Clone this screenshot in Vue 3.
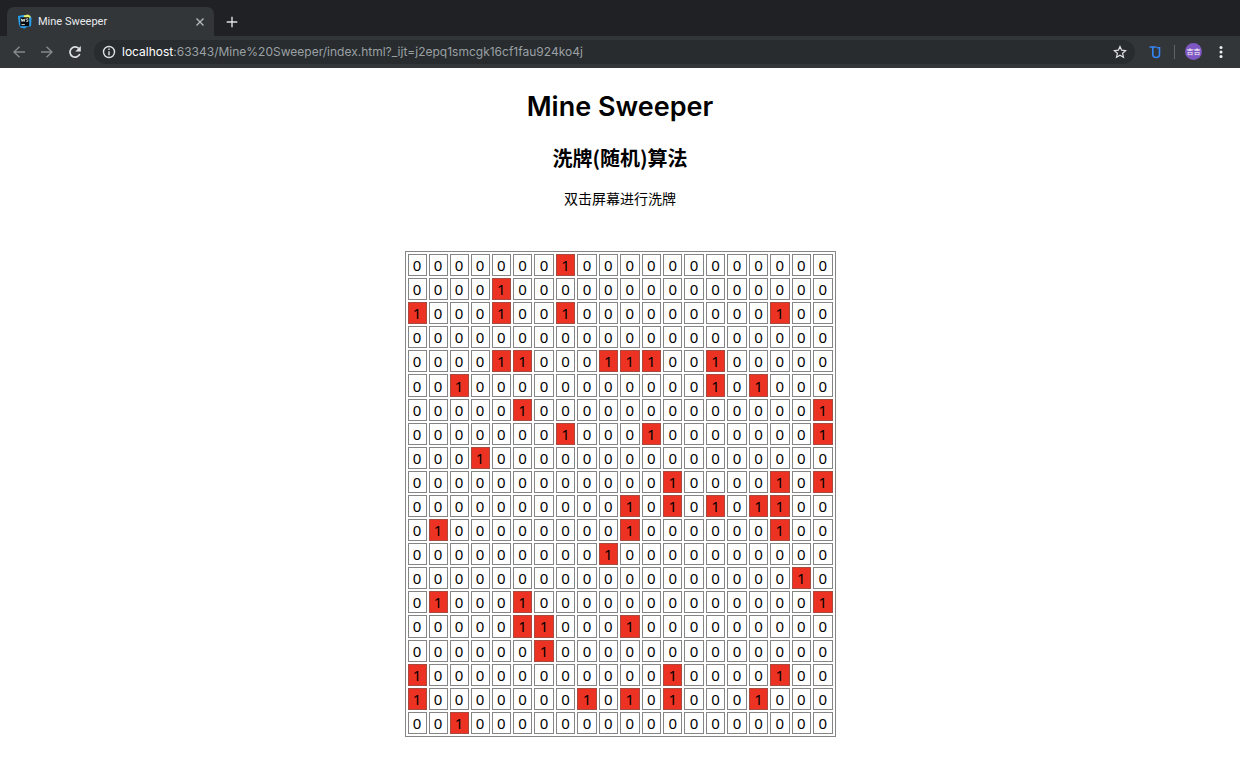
<script setup>
const columns = 20
const mines = [
  [7], [4], [0, 4, 7, 17], [], [4, 5, 9, 10, 11, 14],
  [2, 14, 16], [5, 19], [7, 11, 19], [3], [12, 17, 19],
  [10, 12, 14, 16, 17], [1, 10, 17], [9], [18], [1, 5, 19],
  [5, 6, 10], [6], [0, 12, 17], [0, 8, 10, 12, 16], [2],
]
const board = mines.map((row) =>
  Array.from({ length: columns }, (_, c) => (row.includes(c) ? 1 : 0))
)
</script>

<template>
  <div class="browser">
    <header>
      <div class="tabs">
        <div class="tab">
          <svg class="favicon" viewBox="0 0 16 16">
            <path d="M1 2l6-1 7 1 1.500 2-.5 9-4 .5-3 2-4.500-1L2 11z" fill="#29a0ee" />
            <path d="M7.500 1.500l4-1 3 1.500-.5 2.500-7-.5z" fill="#e5ec6b" />
            <path d="M3.500 3.500h9.500v9.500H3.500z" fill="#080b0d" />
            <path d="M4.500 5l.9 3 1.100-2.500 1.100 2.500.9-3M12 5.300c-1-.7-2.300-.3-2.100.500.3.800 2 .6 2 1.500 0 .8-1.400.9-2.200.3M4.800 11.300h3.500" fill="none" stroke="#fff" stroke-width=".9" />
          </svg>
          <span class="tab-title">Mine Sweeper</span>
          <button class="icon close" aria-label="Close tab">
            <svg viewBox="0 0 10 10"><path d="M1.500 1.500l7 7m0-7l-7 7" /></svg>
          </button>
        </div>
        <button class="icon add" aria-label="New tab">
          <svg viewBox="0 0 12 12"><path d="M6 .7v10.600M.7 6h10.600" /></svg>
        </button>
      </div>
      <nav class="toolbar">
        <button class="icon dim" aria-label="Back">
          <svg viewBox="0 0 14 14"><path d="M13 7H2m5.500-5.300L2 7l5.500 5.300" /></svg>
        </button>
        <button class="icon dim" aria-label="Forward">
          <svg viewBox="0 0 14 14"><path d="M1 7h11M6.500 1.700L12 7l-5.500 5.300" /></svg>
        </button>
        <button class="icon reload" aria-label="Reload">
          <svg viewBox="0 0 14 14">
            <path d="M11.800 9A5.100 5.100 0 1 1 10.700 3.400" />
            <path class="solid" d="M12.800 1v5.500H7.300z" />
          </svg>
        </button>
        <div class="address">
          <svg class="info" viewBox="0 0 14 14">
            <circle cx="7" cy="7" r="5.500" /><path d="M7 6.200v4M7 3.600v1.500" />
          </svg>
          <a class="url" href="#"><b>localhost</b>:63343/Mine%20Sweeper/index.html?_ijt=j2epq1smcgk16cf1fau924ko4j</a>
          <button class="icon star" aria-label="Bookmark">
            <svg viewBox="0 0 14 14"><path d="M7 1.500l1.600 3.700 4 .4-3 2.700.9 4L7 10.200l-3.500 2.100.9-4-3-2.700 4-.4z" /></svg>
          </button>
        </div>
        <button class="icon extension" aria-label="Extension">
          <svg viewBox="0 0 14 14"><path d="M1.500 2h7M4.800 2v7.500c0 4 6.700 4 6.700 0V2.800H9" /></svg>
        </button>
        <span class="divider"></span>
        <button class="avatar">吉吉</button>
        <button class="icon menu" aria-label="Menu">
          <svg viewBox="0 0 14 14">
            <circle cx="7" cy="2.500" r="1.500" /><circle cx="7" cy="7" r="1.500" /><circle cx="7" cy="11.500" r="1.500" />
          </svg>
        </button>
      </nav>
    </header>
    <main>
      <h1>Mine Sweeper</h1>
      <h2>洗牌(随机)算法</h2>
      <p>双击屏幕进行洗牌</p>
      <table>
        <colgroup>
          <col class="narrow" span="4" />
          <col span="16" />
        </colgroup>
        <tbody>
          <tr v-for="(row, r) in board" :key="r">
            <td v-for="(value, c) in row" :key="c" :class="{ mine: value }">{{ value }}</td>
          </tr>
        </tbody>
      </table>
    </main>
  </div>
</template>

<style>
body {
  margin: 0;
  background: #fff;
}
</style>

<style scoped>
.browser {
  font-family: Inter, "Noto Sans CJK SC", sans-serif;
  color: #000;
}
button {
  padding: 0;
  border: 0;
  background: none;
  font-family: inherit;
}
svg {
  display: block;
  width: 14px;
  height: 14px;
}
.icon,
.info {
  flex: none;
  fill: none;
  stroke: #dfe1e3;
  stroke-width: 1.4;
}
.tabs {
  display: flex;
  align-items: flex-end;
  height: 36px;
  background: #202124;
}
.tab {
  display: flex;
  align-items: center;
  box-sizing: border-box;
  width: 207px;
  height: 29px;
  margin-left: 7px;
  padding: 0 9px 0 10px;
  border-radius: 7px 7px 0 0;
  background: #323639;
  color: #e8eaed;
  font-family: Roboto, sans-serif;
  font-size: 11px;
}
.favicon {
  width: 15px;
  height: 15px;
}
.tab-title {
  flex: 1;
  margin-left: 6px;
}
.close {
  stroke: #b4b7ba;
}
.close svg {
  width: 10px;
  height: 10px;
}
.add {
  margin: 0 0 8px 12px;
}
.add svg {
  width: 12px;
  height: 12px;
}
.toolbar {
  display: flex;
  align-items: center;
  box-sizing: border-box;
  height: 32px;
  padding: 0 12px 1px;
  background: #323639;
}
.dim {
  margin-right: 14px;
  stroke: #85898c;
}
.reload {
  stroke-width: 1.7;
}
.solid {
  fill: #dfe1e3;
  stroke: none;
}
.address {
  display: flex;
  flex: 1;
  align-items: center;
  height: 24px;
  margin-left: 12px;
  padding: 0 8px;
  border-radius: 12px;
  background: #282c2f;
}
.url {
  flex: 1;
  margin-left: 6px;
  color: #9aa0a4;
  font-size: 12px;
  text-decoration: none;
  white-space: nowrap;
}
.url b {
  color: #fff;
  font-weight: 400;
}
.star {
  stroke-width: 1.2;
}
.extension {
  margin-left: 13px;
  stroke: #3586f5;
  stroke-width: 1.6;
}
.divider {
  width: 1px;
  height: 14px;
  margin: 0 10px 0 12px;
  background: #5f6368;
}
.avatar {
  width: 17px;
  height: 17px;
  border-radius: 50%;
  background: #7e57c2;
  color: #fff;
  font-size: 7px;
  line-height: 17px;
}
.menu {
  margin-left: 12px;
  fill: #f1f3f4;
  stroke: none;
}
main {
  text-align: center;
}
h1 {
  margin: 21px 0 0;
  font-size: 27px;
  font-weight: 600;
  line-height: 36px;
}
h2 {
  margin: 18px 0 0;
  font-family: "Noto Sans CJK SC", sans-serif;
  font-size: 20px;
  font-weight: 700;
  line-height: 30px;
}
p {
  margin: 16px 0 0;
  font-size: 14px;
  line-height: 20px;
}
table {
  width: 431px;
  height: 486px;
  margin: 42px auto 0;
  border: 1px solid #858585;
  border-spacing: 2px;
}
.narrow {
  width: 19px;
}
td {
  padding: 0;
  border: 1px solid #858585;
  font-family: "Noto Sans", sans-serif;
  font-size: 15px;
  line-height: 20px;
}
.mine {
  border-color: #a84a40;
  background: #ec3323;
}
</style>
